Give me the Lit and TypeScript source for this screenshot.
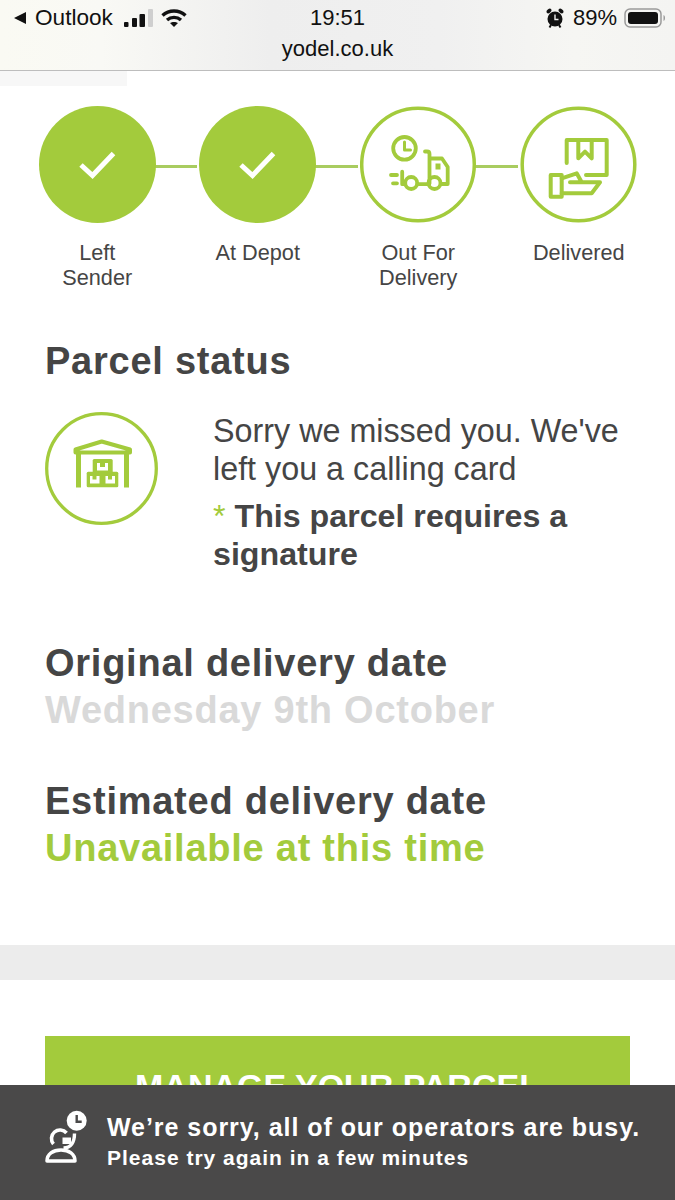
import { LitElement, html, css, svg } from 'lit';
import { customElement } from 'lit/decorators.js';

const GREEN = '#a3cb3c';

const check = svg`
  <circle cx="58.5" cy="58.5" r="58.5" fill="${GREEN}"></circle>
  <path d="M42 59 L53.500 69.500 L74.500 47.500" fill="none" stroke="#fff" stroke-width="5"></path>`;

const truck = svg`
  <circle cx="58" cy="58.5" r="56.3" fill="#fff" stroke="${GREEN}" stroke-width="3.5"></circle>
  <g fill="none" stroke="${GREEN}" stroke-width="3.8" stroke-linejoin="round" stroke-linecap="round">
    <circle cx="44.500" cy="42.300" r="11.300"></circle>
    <path d="M44.500 36 V44 H50.500" stroke-width="3"></path>
    <path d="M65 45.500 H67 Q69.500 45.500 69.500 48 V77.500"></path>
    <path d="M70.500 52.500 H82 L87.700 61 V78 H82"></path>
    <circle cx="51.200" cy="77" r="6"></circle>
    <circle cx="74.500" cy="77" r="6"></circle>
    <path d="M57.500 78.200 H68.500 M42.200 65.700 V78.200 H45 M31 69 H37 M33 77.300 H37"></path>
  </g>
  <rect x="75.500" y="57.500" width="5" height="6" fill="${GREEN}"></rect>`;

const delivered = svg`
  <circle cx="58.5" cy="58.5" r="56.3" fill="#fff" stroke="${GREEN}" stroke-width="3.5"></circle>
  <g fill="none" stroke="${GREEN}" stroke-width="4" stroke-linejoin="round" stroke-linecap="round">
    <path d="M46.700 57 V34 H86.700 V69 H66"></path>
    <path d="M58.300 34 V52.300 L65 45.700 L71.700 52.300 V34"></path>
    <rect x="30.700" y="69" width="11" height="21.700"></rect>
    <path d="M41.700 72.300 L56.700 67.300 L61.700 76.300 H50 M61.700 76.300 H80 L71.700 87.300 H41.700"></path>
  </g>`;

const warehouse = svg`
  <circle cx="56.5" cy="56.5" r="54.8" fill="#fff" stroke="${GREEN}" stroke-width="3.300"></circle>
  <path d="M30.500 37.500 L56.700 29.500 L85 37.500 V40.500 H30.500 Z" fill="none" stroke="${GREEN}" stroke-width="4" stroke-linejoin="round"></path>
  <rect x="31" y="41" width="5" height="34.500" fill="${GREEN}"></rect>
  <rect x="79" y="41" width="5" height="34.500" fill="${GREEN}"></rect>
  <rect x="47.700" y="47" width="20" height="15" rx="1.500" fill="${GREEN}"></rect>
  <rect x="41.700" y="59.700" width="31.600" height="15.600" rx="1.500" fill="${GREEN}"></rect>
  <path d="M52 51 H55 V55 H60 V51 H63 V58.500 H52 Z" fill="#fff"></path>
  <path d="M45 64 H47.500 V67.500 H51.500 V64 H54.500 V71.500 H45 Z" fill="#fff"></path>
  <path d="M60.500 64 H63 V67.500 H67 V64 H70 V71.500 H60.500 Z" fill="#fff"></path>`;

const STEPS = [
  { label: ['Left', 'Sender'], icon: check },
  { label: ['At Depot'], icon: check },
  { label: ['Out For', 'Delivery'], icon: truck },
  { label: ['Delivered'], icon: delivered },
];

@customElement('app-root')
export class AppRoot extends LitElement {
  static styles = css`
    :host {
      display: block;
      position: relative;
      width: 675px;
      height: 1200px;
      overflow: hidden;
      background: #fff;
      color: #454545;
      font-family: 'Liberation Sans', Arial, sans-serif;
    }
    .browser {
      box-sizing: border-box;
      height: 71px;
      border-bottom: 1px solid #bdbdbd;
      background: linear-gradient(90deg, #fafaf3 0%, #f9f9f5 15%, #eeeeee 40%, #f0f0f0 65%, #f6f6f3 85%, #f4f4f2 100%);
      color: #111;
    }
    .status {
      display: grid;
      grid-template-columns: 1fr auto 1fr;
      align-items: center;
      height: 36px;
      padding: 0 9px;
      font-size: 22px;
    }
    .left, .right {
      display: flex;
      align-items: center;
    }
    .right {
      justify-content: flex-end;
    }
    .back {
      margin-left: 5px;
    }
    .outlook {
      margin: 0 11px 0 9px;
      font-size: 22.6px;
    }
    .wifi {
      margin-left: 8px;
    }
    .percent {
      margin: 0 7px 0 9px;
    }
    .url {
      text-align: center;
      font-size: 22px;
      line-height: 26px;
    }
    .patch {
      width: 127px;
      height: 15px;
      background: #f7f7f7;
    }
    .steps {
      display: grid;
      grid-template-columns: repeat(4, 160.5px);
      padding: 20px 0 0 17px;
    }
    .step {
      position: relative;
      display: flex;
      flex-direction: column;
      align-items: center;
      font-size: 21.7px;
      line-height: 25px;
      text-align: center;
    }
    .step svg {
      position: relative;
      z-index: 1;
      display: block;
      margin-bottom: 17px;
    }
    .step:not(:last-child)::after {
      content: '';
      position: absolute;
      top: 59px;
      left: 130px;
      width: 50px;
      height: 3px;
      background: #a9cc60;
    }
    .content {
      padding: 0 45px;
    }
    h2 {
      margin: 0;
      font-size: 38px;
      line-height: 47px;
      font-weight: bold;
      letter-spacing: 0.75px;
    }
    .status-title {
      margin-top: 48px;
    }
    .parcel {
      display: flex;
      gap: 55px;
      margin-top: 27px;
    }
    .parcel svg {
      flex: none;
      display: block;
    }
    .message {
      font-size: 32.3px;
      line-height: 38px;
    }
    .message p {
      margin: 0;
    }
    .message .note {
      margin-top: 9px;
      font-weight: bold;
      font-size: 32.2px;
    }
    .star {
      color: #a3cb3c;
      font-weight: normal;
    }
    .original {
      margin-top: 67px;
    }
    .estimated {
      margin-top: 44px;
    }
    .grey {
      color: #d9d9d9;
    }
    .green {
      color: #a3cb3c;
    }
    .band {
      height: 35px;
      margin-top: 73px;
      background: #ececec;
    }
    .button {
      box-sizing: border-box;
      height: 110px;
      margin: 56px 45px 0;
      padding-top: 32px;
      background: #a3cb3c;
      color: #fff;
      font-size: 34px;
      font-weight: bold;
      line-height: 36px;
      text-align: center;
    }
    .notice {
      position: absolute;
      left: 0;
      right: 0;
      bottom: 0;
      display: flex;
      align-items: center;
      gap: 19px;
      box-sizing: border-box;
      height: 115px;
      padding: 0 0 0 44px;
      background: #4a4949;
      color: #fff;
      font-weight: bold;
    }
    .notice svg {
      flex: none;
      display: block;
    }
    .notice .one {
      font-size: 25px;
      line-height: 31px;
      letter-spacing: 0.96px;
    }
    .notice .two {
      font-size: 21px;
      line-height: 30px;
      letter-spacing: 1px;
    }
  `;

  render() {
    return html`
      <div class="browser">
        <div class="status">
          <div class="left">
            <svg class="back" width="12" height="12" viewBox="0 0 12 12"><path d="M12 0 V12 L0 6 Z" fill="#111"></path></svg>
            <span class="outlook">Outlook</span>
            <svg width="29" height="18" viewBox="0 0 29 18">
              <rect x="0" y="13" width="4.500" height="5" rx="1" fill="#111"></rect>
              <rect x="8" y="9" width="5" height="9" rx="1" fill="#111"></rect>
              <rect x="15.500" y="5" width="5.500" height="13" rx="1" fill="#111"></rect>
              <rect x="24" y="0" width="5" height="18" rx="1" fill="#cfcfcf"></rect>
            </svg>
            <svg class="wifi" width="26" height="18" viewBox="0 0 26 18" fill="none" stroke="#111" stroke-width="3.400">
              <path d="M1.500 6.500 C8 0.500 18 0.500 24.500 6.500"></path>
              <path d="M6 11 C10 7.500 16 7.500 20 11"></path>
              <path d="M13 18 L9 14 C11 12.500 15 12.500 17 14 Z" fill="#111" stroke="none"></path>
            </svg>
          </div>
          <div>19:51</div>
          <div class="right">
            <svg width="18" height="20" viewBox="0 0 18 20">
              <circle cx="9" cy="11" r="7.500" fill="#111"></circle>
              <ellipse cx="3" cy="3" rx="2.800" ry="1.800" transform="rotate(-40 3 3)" fill="#111"></ellipse>
              <ellipse cx="15" cy="3" rx="2.800" ry="1.800" transform="rotate(40 15 3)" fill="#111"></ellipse>
              <path d="M3.500 19.500 L5 17 M14.500 19.500 L13 17" stroke="#111" stroke-width="2"></path>
              <path d="M9 6.500 V11.500 H12.500" fill="none" stroke="#eee" stroke-width="1.400"></path>
            </svg>
            <span class="percent">89%</span>
            <svg width="42" height="20" viewBox="0 0 42 20">
              <rect x="1" y="1" width="36" height="18" rx="5" fill="none" stroke="#9a9a9a" stroke-width="1.500"></rect>
              <rect x="4" y="4" width="30" height="12" rx="3" fill="#111"></rect>
              <path d="M39.500 7 C41.500 7.500 41.500 12.500 39.500 13 Z" fill="#9a9a9a"></path>
            </svg>
          </div>
        </div>
        <div class="url">yodel.co.uk</div>
      </div>
      <div class="patch"></div>
      <div class="steps">
        ${STEPS.map(
          (s) => html`<div class="step">
            <svg width="117" height="117" viewBox="0 0 117 117">${s.icon}</svg>
            ${s.label.map((l) => html`<div>${l}</div>`)}
          </div>`
        )}
      </div>
      <div class="content">
        <h2 class="status-title">Parcel status</h2>
        <div class="parcel">
          <svg width="113" height="113" viewBox="0 0 113 113">${warehouse}</svg>
          <div class="message">
            <p>Sorry we missed you. We've<br />left you a calling card</p>
            <p class="note"><span class="star">*</span> This parcel requires a<br />signature</p>
          </div>
        </div>
        <h2 class="original">Original delivery date</h2>
        <h2 class="grey">Wednesday 9th October</h2>
        <h2 class="estimated">Estimated delivery date</h2>
        <h2 class="green">Unavailable at this time</h2>
      </div>
      <div class="band"></div>
      <div class="button">MANAGE YOUR PARCEL</div>
      <div class="notice">
        <svg width="44" height="65" viewBox="0 0 44 65">
          <circle cx="32.700" cy="10.700" r="10" fill="#fff"></circle>
          <path d="M32.700 5 V11.700 H37.700" fill="none" stroke="#4a4949" stroke-width="2.400"></path>
          <path d="M9.500 34 A8.500 8.500 0 1 1 22.500 23" fill="none" stroke="#fff" stroke-width="3.600"></path>
          <path d="M30.500 23.500 C30.500 32 27 38 19.500 38" fill="none" stroke="#fff" stroke-width="3.400"></path>
          <rect x="18.500" y="27.500" width="8.500" height="6.500" fill="#fff"></rect>
          <path d="M3 51 C3 44 9 40 17 40 C25 40 31 44 31 51 Z" fill="none" stroke="#fff" stroke-width="3.500" stroke-linejoin="round"></path>
        </svg>
        <div>
          <div class="one">We’re sorry, all of our operators are busy.</div>
          <div class="two">Please try again in a few minutes</div>
        </div>
      </div>
    `;
  }
}
